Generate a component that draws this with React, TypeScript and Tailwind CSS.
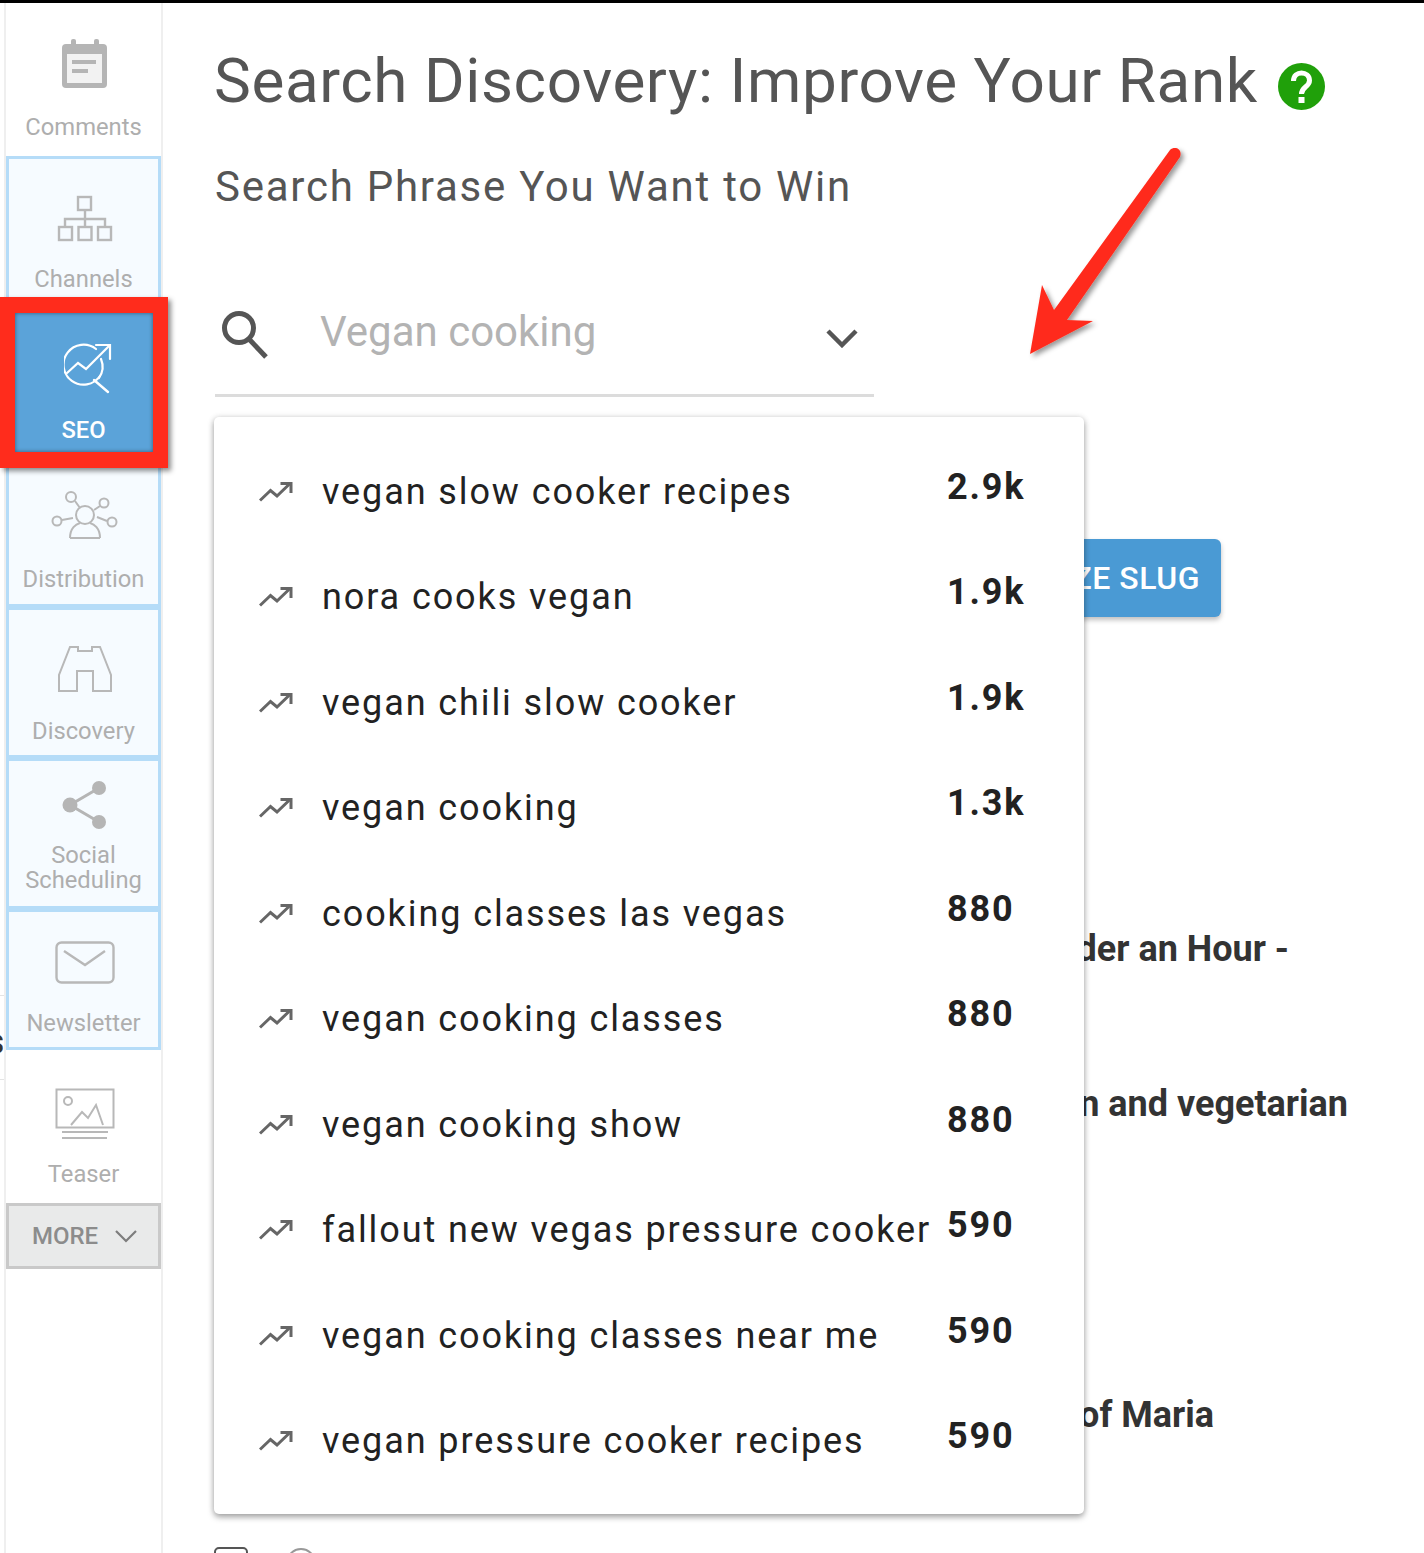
import React from "react";

const roboto = "font-['Roboto',sans-serif]";

function Item({ label, icon, cls, h }: { label: React.ReactNode; icon: React.ReactNode; cls: string; h: string }) {
  return (
    <div className={`flex flex-col items-center shrink-0 ${cls} ${h}`}>
      <div className="ml-[2px]">{icon}</div>
      <div className="text-[23.750px] leading-[25px] text-center text-[#aeaeae]">{label}</div>
    </div>
  );
}

const blue = "border-[3px] border-[#b5dcf8] bg-[#f6fbff]";

const rows: [string, string][] = [
  ["vegan slow cooker recipes", "2.9k"],
  ["nora cooks vegan", "1.9k"],
  ["vegan chili slow cooker", "1.9k"],
  ["vegan cooking", "1.3k"],
  ["cooking classes las vegas", "880"],
  ["vegan cooking classes", "880"],
  ["vegan cooking show", "880"],
  ["fallout new vegas pressure cooker", "590"],
  ["vegan cooking classes near me", "590"],
  ["vegan pressure cooker recipes", "590"],
];

function Trend() {
  return (
    <svg width="34" height="24" viewBox="0 0 34 24" fill="none" className="shrink-0" stroke="#666" strokeWidth="3">
      <path d="M1 20.500 L11.500 10.500 L18 16 L30.500 4" />
      <path d="M21.500 3.500 H32 V13" />
    </svg>
  );
}

export default function App() {
  return (
    <div className={`relative w-[1424px] h-[1553px] overflow-hidden bg-white ${roboto}`}>
      <div className="h-[3px] bg-black" />

      <div className="absolute left-0 top-[995px] w-[4px] h-[85px] border-y border-[#e4e4e4] overflow-hidden">
        <span className="absolute right-0 top-[24px] text-[36px] leading-[44px] font-bold text-[#333]">s</span>
      </div>

      <div className="flex">
        <aside className="ml-[4px] w-[159px] h-[1550px] shrink-0 border-x-2 border-[#efefef] flex flex-col">
          <Item h="h-[153px]" cls="pt-[36px] gap-[26px]" label="Comments" icon={
            <svg width="46" height="50" viewBox="0 0 46 50" className="block">
              <rect x="0" y="5" width="45" height="44" rx="4" fill="#b5b5b5" />
              <rect x="9" y="0" width="5" height="9" rx="2" fill="#b5b5b5" />
              <rect x="32" y="0" width="5" height="9" rx="2" fill="#b5b5b5" />
              <rect x="5" y="15" width="35" height="29" fill="#f2f2f2" />
              <rect x="10" y="21" width="24" height="4" fill="#b5b5b5" />
              <rect x="10" y="30" width="16" height="4" fill="#b5b5b5" />
            </svg>
          } />
          <Item h="h-[150px]" cls={`${blue} pt-[36px] gap-[24px]`} label="Channels" icon={
            <svg width="56" height="48" viewBox="0 0 56 48" fill="none" stroke="#b8b8b8" strokeWidth="2.400" className="block">
              <rect x="21" y="2" width="13" height="13" />
              <rect x="2" y="32" width="13" height="13" />
              <rect x="21.500" y="32" width="13" height="13" />
              <rect x="41" y="32" width="13" height="13" />
              <path d="M28 15 V32 M8 32 V24 H48 V32" />
            </svg>
          } />
          <div className="h-[150px] shrink-0 bg-[#5ba3d9] flex flex-col items-center pt-[36px] gap-[24px]">
            <svg width="50" height="52" viewBox="0 0 50 52" fill="none" stroke="#fff" strokeWidth="2.200" strokeLinecap="round" className="block ml-[10px]">
              <path d="M32 7 A20 20 0 1 0 36 34" />
              <path d="M3 31 L14 21 L22 27 L45 4" />
              <path d="M32 3 H46 V17" />
              <path d="M30 38 L44 50" strokeWidth="2.400" />
              <path d="M37 17 A20 20 0 0 1 35 36" />
            </svg>
            <div className="text-[23.750px] leading-[25px] text-white font-medium">SEO</div>
          </div>
          <Item h="h-[151px]" cls={`${blue} pt-[32px] gap-[26px]`} label="Distribution" icon={
            <svg width="68" height="50" viewBox="0 0 68 50" fill="none" stroke="#b8b8b8" strokeWidth="2" className="block">
              <circle cx="20" cy="6" r="5" />
              <circle cx="53" cy="12" r="4.500" />
              <circle cx="6" cy="30" r="4.500" />
              <circle cx="61" cy="31" r="4.500" />
              <circle cx="34" cy="24" r="9" />
              <path d="M19 47 C19 37 25 33 29 32 M49 47 C49 37 43 33 39 32 M19 47 H49" />
              <path d="M24 10 L29 17 M49 15 L43 19 M11 29 L22 27 M56 30 L46 26" />
            </svg>
          } />
          <Item h="h-[151px]" cls={`${blue} pt-[35px] gap-[26px]`} label="Discovery" icon={
            <svg width="56" height="48" viewBox="0 0 56 48" fill="none" stroke="#b8b8b8" strokeWidth="2" className="block">
              <path d="M2 46 V30 L13 2 H21 V6 H35 V2 H43 L54 30 V46 H36 V26 H20 V46 Z" />
            </svg>
          } />
          <Item h="h-[151px]" cls={`${blue} pt-[19px] gap-[13px]`} label={<>Social<br />Scheduling</>} icon={
            <svg width="46" height="50" viewBox="0 0 46 50" fill="none" className="block">
              <path d="M37 8 L8 25 L37 42" stroke="#b5b5b5" strokeWidth="3" />
              <circle cx="37" cy="8" r="7" fill="#b5b5b5" />
              <circle cx="8" cy="25" r="7.500" fill="#b5b5b5" />
              <circle cx="37" cy="42" r="7" fill="#b5b5b5" />
            </svg>
          } />
          <Item h="h-[141px]" cls={`${blue} pt-[29px] gap-[27px]`} label="Newsletter" icon={
            <svg width="60" height="43" viewBox="0 0 60 43" fill="none" stroke="#b8b8b8" strokeWidth="2.400" className="block">
              <rect x="1.500" y="1.500" width="57" height="40" rx="5" />
              <path d="M9 10 L30 24 L50 10" />
            </svg>
          } />
          <Item h="h-[153px]" cls="pt-[38px] gap-[23px]" label="Teaser" icon={
            <svg width="60" height="51" viewBox="0 0 60 51" fill="none" stroke="#b8b8b8" strokeWidth="2" className="block">
              <rect x="1.500" y="1.500" width="57" height="38" />
              <circle cx="13" cy="13" r="4" />
              <path d="M16 37 L27 24 L33 30 L41 17 L48 37" />
              <path d="M7 44 H53 M7 50 H52" />
            </svg>
          } />
          <div className="h-[66px] shrink-0 border-[3px] border-[#c9c9c9] bg-[#e9eaea] flex items-center justify-center gap-[16px] pl-[3px]">
            <span className="text-[24px] font-medium text-[#8c8c8c]">MORE</span>
            <svg width="24" height="14" viewBox="0 0 24 14" fill="none" stroke="#7d7d7d" strokeWidth="2.200" className="block">
              <path d="M2 2 L12 12 L22 2" />
            </svg>
          </div>
        </aside>

        <main className="flex-1 pl-[52px] text-[#555]">
          <h1 className="mt-[40px] -ml-px text-[62px] leading-[76px] tracking-[0.6px] flex items-center gap-[20px] whitespace-nowrap">
            Search Discovery: Improve Your Rank
            <svg width="47" height="47" viewBox="0 0 47 47" className="shrink-0 mt-[10px]">
              <circle cx="23.500" cy="23.500" r="23.500" fill="#20a00a" />
              <path d="M15.500 18 C15.500 7 31.500 7.500 31.500 17.500 C31.500 24 23.500 23.500 23.500 31" fill="none" stroke="#fff" strokeWidth="5" />
              <rect x="20.500" y="34" width="6" height="6" fill="#fff" />
            </svg>
          </h1>
          <h2 className="mt-[43px] text-[42px] leading-[50px] tracking-[1.750px]">Search Phrase You Want to Win</h2>
          <div className="mt-[89px] w-[659px] h-[96px] border-b-[3px] border-[#dcdcdc] flex items-start">
            <svg width="48" height="50" viewBox="0 0 48 50" fill="none" stroke="#555" strokeWidth="5" className="shrink-0 mt-[9px] ml-[6px]">
              <circle cx="18" cy="18" r="14.500" />
              <path d="M28 29 L45 47" />
            </svg>
            <span className="ml-[51px] mt-[6px] text-[42px] leading-[50px] text-[#b3b3b3]">Vegan cooking</span>
            <svg width="32" height="20" viewBox="0 0 32 20" fill="none" stroke="#555" strokeWidth="4.500" className="ml-auto mr-[16px] mt-[27px]">
              <path d="M2 3 L16 17 L30 3" />
            </svg>
          </div>
          <div className="mt-[142px] ml-[480px] w-[526px] h-[78px] flex items-center justify-end pr-[21px] rounded-[6px] bg-[#4a9ad4] shadow-[0_3px_5px_rgba(0,0,0,0.25)] text-[32px] font-medium text-white tracking-[0.5px] whitespace-nowrap overflow-hidden">
            OPTIMIZE SLUG
          </div>
          <div className="mt-[310px] w-[1074px] text-right text-[36px] leading-[44px] font-bold text-[#333] whitespace-nowrap">Under an Hour -</div>
          <div className="mt-[111px] w-[1133px] text-right text-[36px] leading-[44px] font-bold text-[#333] whitespace-nowrap">vegan and vegetarian</div>
          <div className="mt-[267px] w-[999px] text-right text-[36px] leading-[44px] font-bold text-[#333] whitespace-nowrap">of Maria</div>
        </main>
      </div>

      <div className="absolute left-[214px] top-[417px] w-[870px] h-[1097px] bg-white rounded-[5px] shadow-[0_3px_6px_rgba(0,0,0,0.35),0_0_6px_rgba(0,0,0,0.1)] pt-[20px]">
        {rows.map(([t, n]) => (
          <div key={t} className="h-[105.500px] flex items-center text-[36px] text-[#222] whitespace-nowrap">
            <div className="ml-[45px] mt-[4px]"><Trend /></div>
            <span className="ml-[29px] w-[625px] tracking-[1.900px] leading-[44px] mt-[4px]">{t}</span>
            <span className="font-bold tracking-[1.800px] leading-[44px] mt-[-6px]">{n}</span>
          </div>
        ))}
      </div>

      <div className="absolute left-[214px] top-[1547px] w-[34px] h-[12px] rounded-[5px] border-[2px] border-[#555]" />
      <div className="absolute left-[286px] top-[1548px] w-[30px] h-[30px] rounded-full border-[2px] border-[#999]" />

      <div className="absolute left-0 top-[297px] w-[168px] h-[171px] border-x-[15px] border-y-[16px] border-[#ff2c1c] shadow-[3px_3px_5px_rgba(0,0,0,0.45),inset_0_0_4px_rgba(0,0,0,0.45)]" />

      <svg className="absolute left-[1020px] top-[140px]" width="175" height="225" viewBox="0 0 175 225" fill="none">
        <defs>
          <filter id="s" x="-20%" y="-20%" width="140%" height="140%">
            <feDropShadow dx="3" dy="3" stdDeviation="2.500" floodColor="#000" floodOpacity="0.4" />
          </filter>
        </defs>
        <path filter="url(#s)" fill="#ff2c1c" d="M150 10 C154 6 163 8 160 17 L47 180 L73 181 L10 214 L22 145 L34 170 Z" />
      </svg>
    </div>
  );
}
